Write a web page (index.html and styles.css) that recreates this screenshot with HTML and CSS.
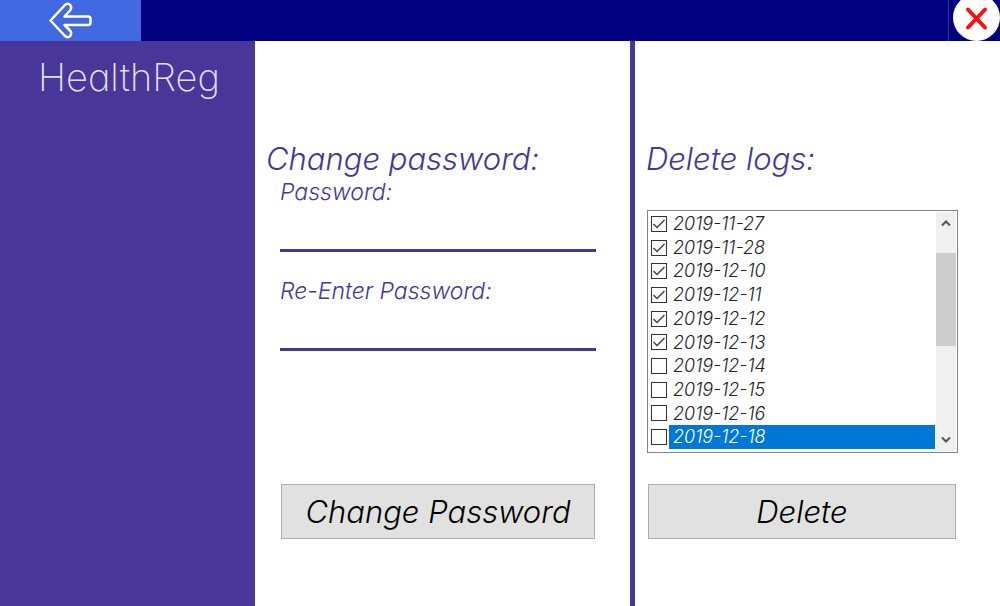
FILE: index.html
```html
<!DOCTYPE html>
<html lang="en">
<head>
<meta charset="utf-8">
<title>HealthReg</title>
<link rel="stylesheet" href="styles.css">
</head>
<body>
<header class="topbar">
  <button class="back" type="button" aria-label="Back">
    <svg width="44" height="38" viewBox="0 0 44 38" aria-hidden="true"><path d="M1.500 18.500 15.500 3.500Q19 0 21.500 3.500Q23 6 21 8.500L15.500 14.500H39Q41.500 14.500 41.500 17V20.500Q41.500 23 39 23H15.500L21 28.500Q23 31 21.500 33.500Q19 37 15.500 33.500Z"/></svg>
  </button>
  <button class="close" type="button" aria-label="Close">
    <svg width="51" height="41" viewBox="0 0 51 41" aria-hidden="true"><circle cx="27.500" cy="17.500" r="23.500"/><path d="M19 9.500 36 27.500M36 9.500 19 27.500"/></svg>
  </button>
</header>
<div class="layout">
  <aside class="sidebar"><h1 class="brand">HealthReg</h1></aside>
  <main class="panels">
    <form class="panel password">
      <h2 class="title">Change password:</h2>
      <div class="fields">
        <div class="field"><label for="pw">Password:</label><input id="pw" type="password"></div>
        <div class="field"><label for="pw2">Re-Enter Password:</label><input id="pw2" type="password"></div>
      </div>
      <button class="action" type="button">Change Password</button>
    </form>
    <form class="panel logs">
      <h2 class="title">Delete logs:</h2>
      <div class="listbox">
        <div class="rows">
          <label class="row"><input type="checkbox" checked><span>2019-11-27</span></label>
          <label class="row"><input type="checkbox" checked><span>2019-11-28</span></label>
          <label class="row"><input type="checkbox" checked><span>2019-12-10</span></label>
          <label class="row"><input type="checkbox" checked><span>2019-12-11</span></label>
          <label class="row"><input type="checkbox" checked><span>2019-12-12</span></label>
          <label class="row"><input type="checkbox" checked><span>2019-12-13</span></label>
          <label class="row"><input type="checkbox"><span>2019-12-14</span></label>
          <label class="row"><input type="checkbox"><span>2019-12-15</span></label>
          <label class="row"><input type="checkbox"><span>2019-12-16</span></label>
          <label class="row selected"><input type="checkbox"><span>2019-12-18</span></label>
        </div>
        <div class="scrollbar">
          <button class="step" type="button" aria-label="Scroll up"><svg width="12" height="8" viewBox="0 0 12 8" aria-hidden="true"><path d="M2 6.500 6 2.500 10 6.500"/></svg></button>
          <div class="track"><div class="thumb"></div></div>
          <button class="step" type="button" aria-label="Scroll down"><svg width="12" height="8" viewBox="0 0 12 8" aria-hidden="true"><path d="M2 1.500 6 5.500 10 1.500"/></svg></button>
        </div>
      </div>
      <button class="action" type="button">Delete</button>
    </form>
  </main>
</div>
</body>
</html>
```
FILE: styles.css
```css
* { box-sizing: border-box; }
body {
  margin: 0;
  min-height: 100vh;
  display: flex;
  flex-direction: column;
  background: #fff;
  color: #483698;
  font-family: "Century Gothic", Inter, sans-serif;
  font-weight: 300;
  font-feature-settings: "cv11";
}
button, input { font: inherit; font-feature-settings: inherit; }
h1, h2 { margin: 0; font-weight: 300; }

.topbar { display: flex; justify-content: space-between; height: 41px; background: #000080; }
.back {
  width: 141px;
  padding: 0;
  border: 0;
  background: #4169e1;
  display: flex;
  align-items: center;
  justify-content: center;
}
.back path { fill: none; stroke: #fff; stroke-width: 2.500; stroke-linejoin: round; }
.close { padding: 0; border: 0; border-left: 1px solid #36367c; background: transparent; display: flex; }
.close circle { fill: #fff; }
.close path { fill: none; stroke: #fe0d0d; stroke-width: 4; stroke-linecap: round; }

.layout { flex: 1; display: flex; }
.sidebar { width: 255px; padding: 14px 16px 16px 38px; background: #483698; }
.brand { font-size: 38px; line-height: 44px; color: #e4defa; font-weight: 200; }
.panels { flex: 1; display: grid; grid-template-columns: 375fr 370fr; }
.panel { display: flex; flex-direction: column; padding-top: 100px; font-style: italic; }
.password { padding-left: 11px; padding-right: 34px; }
.logs { border-left: 5px solid #483698; padding-left: 11px; padding-right: 42px; }
.title { font-size: 31px; line-height: 36px; }

.fields { display: flex; flex-direction: column; gap: 24px; padding-left: 14px; }
.field { display: flex; flex-direction: column; }
.field label { font-size: 23px; line-height: 30px; }
.field input {
  width: 100%;
  height: 45px;
  padding: 0 4px;
  border: 0;
  border-bottom: 3px solid #483698;
  background: transparent;
  font-size: 23px;
  outline: 0;
}
.action {
  height: 55px;
  padding: 0 8px;
  border: 1px solid #adadad;
  background: #e1e1e1;
  color: #000;
  font-size: 31px;
}
.password .action { margin: 133px 1px 0 15px; }
.logs .action { margin: 31px 2px 0; }

.listbox {
  display: flex;
  height: 243px;
  margin: 33px 0 0 1px;
  padding: 1px;
  border: 1px solid #82828c;
}
.rows { flex: 1; display: flex; flex-direction: column; padding-bottom: 2px; }
.row {
  flex: 1;
  display: flex;
  align-items: center;
  gap: 2px;
  padding-left: 2px;
  color: #222;
  font-size: 18px;
  line-height: 22px;
}
.row span { flex: 1; align-self: stretch; padding: 1px 0 0 4px; }
.row.selected span { background: #0078d7; color: #fff; }
.row input {
  appearance: none;
  width: 16px;
  height: 16px;
  margin: 0;
  border: 1px solid #333;
  background: #fff;
}
.row input:checked {
  background: url("data:image/svg+xml,%3Csvg xmlns='http://www.w3.org/2000/svg' viewBox='0 0 14 14'%3E%3Cpath d='M1.500 7 5 10.500 12.500 3' fill='none' stroke='%23444' stroke-width='1.500'/%3E%3C/svg%3E") center / 14px 14px no-repeat;
}
.scrollbar { width: 20px; margin-left: 1px; display: flex; flex-direction: column; background: #f0f0f0; }
.step {
  height: 22px;
  padding: 0;
  border: 0;
  background: transparent;
  display: flex;
  align-items: center;
  justify-content: center;
}
.step path { fill: none; stroke: #555; stroke-width: 2; }
.track { flex: 1; padding-top: 19px; }
.thumb { height: 93px; background: #cdcdcd; }
```
